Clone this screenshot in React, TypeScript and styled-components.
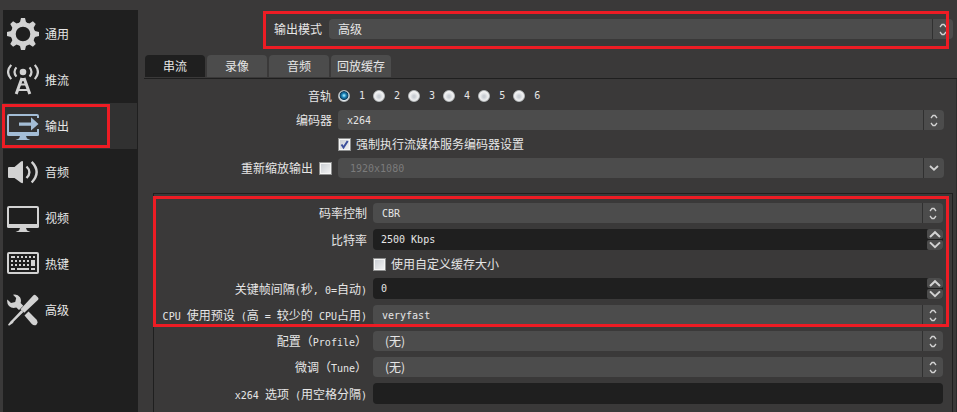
import React from "react";
import styled, { createGlobalStyle, css } from "styled-components";

const cjk = `"Noto Sans CJK SC", "Noto Sans", sans-serif`;
const mono = `"DejaVu Sans Mono", "Noto Sans CJK SC", monospace`;

const GlobalStyle = createGlobalStyle`
  *, *::before, *::after { box-sizing: border-box; }
  body {
    margin: 0;
    background: #3a3939;
    color: #e6e6e6;
    font: 12px/20px ${cjk};
  }
  button, input, select { font: inherit; color: inherit; }
`;

const Page = styled.div`
  display: flex;
  gap: 6px;
  min-height: 100vh;
  padding: 10px 0 0 3px;
`;

const Sidebar = styled.nav`
  flex: none;
  width: 135px;
  padding: 1px 1px 0 0;
  background: #1f1f1f;
`;

const NavItem = styled.button<{ $active?: boolean }>`
  position: relative;
  display: flex;
  align-items: center;
  gap: 6px;
  width: 100%;
  height: 46px;
  padding: 0 4px;
  border: 0;
  text-align: left;
  background: ${(p) => (p.$active ? "#313131" : "transparent")};
`;

const Icon = styled.svg<{ $active?: boolean }>`
  flex: none;
  width: 32px;
  height: 32px;
  color: ${(p) => (p.$active ? "#a3bdd6" : "#d2d2d2")};
`;

const Highlight = styled.span<{ $inset: string; $area?: string }>`
  position: absolute;
  grid-area: ${(p) => p.$area ?? "auto"};
  inset: ${(p) => p.$inset};
  border: 3px solid #ed1c24;
  pointer-events: none;
`;

const Main = styled.main`
  flex: 1;
  min-width: 0;
  display: flex;
  flex-direction: column;
`;

const ModeRow = styled.div`
  position: relative;
  display: grid;
  grid-template-columns: 178px 1fr;
  column-gap: 7px;
  margin: 9px 4px 16px 0;
`;

const Label = styled.label`
  display: flex;
  align-items: center;
  justify-content: flex-end;
  gap: 6px;
  white-space: pre;
`;

const Latin = styled.span`
  font-family: ${mono};
  font-size: 10px;
  line-height: 0;
`;

const SelectWrap = styled.div`
  display: grid;
  grid-template-columns: 1fr 21px;
  height: 20px;
  border-radius: 4px;
  background: #4c4c4c;
`;

const SelectBox = styled.select<{ $latin?: boolean; $indent?: boolean }>`
  grid-area: 1 / 1 / 2 / 3;
  appearance: none;
  min-width: 0;
  padding: 0 21px 0 ${(p) => (p.$indent ? 12 : 9)}px;
  border: 0;
  outline: 0;
  background: transparent;
  opacity: 1;
  ${(p) =>
    p.$latin &&
    css`
      padding-top: 1px;
      font-family: ${mono};
      font-size: 10px;
    `}
  &:disabled { color: #7b7b7b; opacity: 1; }
  option { background: #4c4c4c; }
`;

const SelectArrows = styled.svg`
  grid-area: 1 / 2 / 2 / 3;
  width: 21px;
  height: 20px;
  border-left: 1px solid #303030;
  fill: none;
  stroke: #d2d2d2;
  pointer-events: none;
`;

const Tabs = styled.div`
  display: flex;
  gap: 2px;
  padding: 0 0 1px 1px;
  border-bottom: 1px solid #1f1f1f;
`;

const Tab = styled.button<{ $active?: boolean }>`
  width: 60px;
  height: 22px;
  padding: 0;
  border: 0;
  border-radius: 4px 4px 0 0;
  white-space: nowrap;
  background: ${(p) => (p.$active ? "#1f1f1f" : "#4c4c4c")};
`;

const Pane = styled.section`
  flex: 1;
  display: flex;
  flex-direction: column;
  padding-top: 7px;
  border-right: 1px solid #2b2b2b;
`;

const Form = styled.div`
  display: grid;
  grid-template-columns: 188px 1fr;
  grid-auto-rows: 20px;
  gap: 4px 6px;
  padding-right: 12px;
`;

const Group = styled.div`
  position: relative;
  flex: 1;
  display: grid;
  grid-template-columns: 213px 1fr;
  gap: 6px;
  align-content: start;
  margin: 15px 3px 0 9px;
  padding: 9px 9px 8px 0;
  border: 1px solid #1f1f1f;
  border-bottom: 0;
`;

const Options = styled.div`
  display: flex;
  align-items: center;
  gap: 8px;
`;

const RadioLabel = styled.label`
  display: flex;
  align-items: center;
  gap: 9px;
`;

const Radio = styled.input`
  appearance: none;
  width: 12px;
  height: 12px;
  margin: 0;
  border: 1px solid #b5b9bb;
  border-radius: 50%;
  background: radial-gradient(circle at 50% 55%, #c9ced4 0 15%, #e6e8ea 45%, #fafafa 75%);
  &:checked {
    background: radial-gradient(circle at 50% 45%, #8fdcf5 0 8%, #1c86bd 28%, #10405f 54%, #e8eef2 66%);
  }
`;

const CheckCell = styled.div<{ $compact?: boolean }>`
  grid-column: 2;
  height: ${(p) => (p.$compact ? 16 : 20)}px;
  display: flex;
  align-items: center;
`;

const CheckLabel = styled.label`
  display: flex;
  align-items: center;
  gap: 5px;
  height: 16px;
`;

const CheckFrame = styled.span`
  display: grid;
  width: 13px;
  height: 13px;
  svg {
    grid-area: 1 / 1;
    width: 13px;
    height: 13px;
    fill: none;
    stroke: #3c4f9b;
    stroke-width: 2;
    pointer-events: none;
    visibility: hidden;
  }
  input:checked + svg { visibility: visible; }
`;

const CheckInput = styled.input`
  grid-area: 1 / 1;
  appearance: none;
  width: 13px;
  height: 13px;
  margin: 0;
  border: 1px solid #8e8f8f;
  background: linear-gradient(135deg, #c8ccd2, #f4f4f4);
  box-shadow: inset 0 0 0 1px #f6f6f6;
`;

const TextField = styled.div`
  display: flex;
  min-width: 0;
  height: 21px;
  border-radius: 4px;
  overflow: hidden;
  background: #1f1f1f;
`;

const TextInput = styled.input`
  flex: 1;
  min-width: 0;
  padding: 0 8px;
  border: 0;
  outline: 0;
  background: transparent;
  font-family: ${mono};
  font-size: 10px;
`;

const Stepper = styled.div`
  display: grid;
  grid-template-rows: 10px 10px;
  gap: 1px;
  width: 16px;
`;

const StepButton = styled.button`
  padding: 0;
  border: 0;
  border-radius: 2px;
  background: #4c4c4c;
  svg {
    display: block;
    width: 16px;
    height: 10px;
    fill: none;
    stroke: #d2d2d2;
    stroke-width: 2;
  }
`;

function Screen() {
  return (
    <g fill="currentColor">
      <path d="M8.5 30 12 28.5 13 26H19L20 28.5 23.5 30Z" />
      <path d="M0 22H32V24.5Q32 26 30.5 26H1.5Q0 26 0 24.5Z" />
    </g>
  );
}

const icons: Record<string, React.ReactNode> = {
  general: (
    <g fill="currentColor">
      <circle cx="16" cy="16" r="9.7" fill="none" stroke="currentColor" strokeWidth="4.8" />
      {[0, 45, 90, 135, 180, 225, 270, 315].map((a) => (
        <path key={a} transform={`rotate(${a} 16 16)`} d="M11.3 5.6 13 4 14 0H18L19 4 20.7 5.6Z" />
      ))}
    </g>
  ),
  stream: (
    <g fill="none" stroke="currentColor" strokeWidth="2.2">
      <circle cx="16" cy="8" r="3.3" fill="currentColor" stroke="none" />
      <path d="M9.4 3.4Q5.6 8 9.4 12.6M22.6 3.4Q26.4 8 22.6 12.6" />
      <path d="M4.2 .9Q-2 8 4.2 15.1M27.8 .9Q34 8 27.8 15.1" />
      <path d="M15 14 9.2 30M17 14 22.8 30" strokeWidth="3" />
      <path d="M16 14V17" strokeWidth="4" />
      <path d="M13 20.5H19M11 26H21" strokeWidth="2" />
    </g>
  ),
  output: (
    <>
      <Screen />
      <path d="M31 8V6Q31 5 30 5H2Q1 5 1 6V23M31 19V23" fill="none" stroke="currentColor" strokeWidth="2" />
      <path d="M12 12.4H24V7.3L31.5 14 24 20.6V15.8H12Z" fill="currentColor" />
    </>
  ),
  audio: (
    <g fill="none" stroke="currentColor" strokeWidth="2.4">
      <path d="M2 11H7.5L14 5.5Q16 4.5 16 6V26Q16 28 14 26.8L7.5 22H2Q1 22 1 21V12Q1 11 2 11Z" fill="currentColor" stroke="none" />
      <path d="M19.5 10.5Q25.3 16 19.5 22M24.7 5.8Q34.6 16 24.7 26.5" />
    </g>
  ),
  video: (
    <>
      <Screen />
      <path d="M31 23V6Q31 5 30 5H2Q1 5 1 6V23" fill="none" stroke="currentColor" strokeWidth="2" />
    </>
  ),
  hotkeys: (
    <g fill="currentColor">
      <rect x="1" y="5" width="30" height="20" rx="1" fill="none" stroke="currentColor" strokeWidth="2" />
      <path d="M4 8h4v2h-4zM10 8h2v2h-2zM14 8h2v2h-2zM18 8h2v2h-2zM22 8h2v2h-2zM26 8h2v2h-2z" />
      <path d="M4 12h2v2h-2zM8 12h2v2h-2zM12 12h2v2h-2zM16 12h2v2h-2zM20 12h2v2h-2zM24 12h4v6h-4z" />
      <path d="M4 16h2v2h-2zM8 16h2v2h-2zM12 16h2v2h-2zM16 16h2v2h-2zM20 16h2v2h-2z" />
      <path d="M4 20h4v2h-4zM10 20h12v2h-12zM24 20h4v2h-4z" />
    </g>
  ),
  advanced: (
    <g fill="currentColor">
      <path d="M6 .8Q10.5-.2 13 3.2 14.6 6 13.6 9L16.3 11.8 12 16 9.3 13.5Q5 14.9 2 12 -.4 9.4 .3 5.6L4 9 8.2 8 9.2 4Z" />
      <path d="M17.5 21.5 21.5 17.5 29.2 25.3Q31.6 28.3 29.6 30.4 27.4 32.4 24.8 30Z" />
      <path d="M13.5 15.2 26.2 1.6Q27.5 0 29 1.4L31 3.5Q32.2 5 30.6 6.2L17.3 18.8Z" />
      <path d="M14.4 16 16.4 18 6.8 27.6 6 29 2 31.8 1 30.8 3.8 27 5 26Z" />
    </g>
  ),
};

const navItems = [
  { id: "general", text: "通用" },
  { id: "stream", text: "推流" },
  { id: "output", text: "输出" },
  { id: "audio", text: "音频" },
  { id: "video", text: "视频" },
  { id: "hotkeys", text: "热键" },
  { id: "advanced", text: "高级" },
];

type SelectProps = {
  id: string;
  value: string;
  label?: string;
  latin?: boolean;
  indent?: boolean;
  disabled?: boolean;
  single?: boolean;
};

function Select({ id, value, label, latin, indent, disabled, single }: SelectProps) {
  return (
    <SelectWrap>
      <SelectBox id={id} aria-label={label} $latin={latin} $indent={indent} disabled={disabled}>
        <option>{value}</option>
      </SelectBox>
      <SelectArrows viewBox="0 0 20 20" aria-hidden="true">
        {single ? (
          <path d="M6 8 10 11.7 14 8" strokeWidth="1.8" />
        ) : (
          <path d="M7 8 9 5.5H11L13 8M7 13 9 15.5H11L13 13" strokeWidth="1.3" />
        )}
      </SelectArrows>
    </SelectWrap>
  );
}

function Spin({ id, value }: { id: string; value: string }) {
  return (
    <TextField>
      <TextInput id={id} type="text" defaultValue={value} />
      <Stepper>
        <StepButton aria-label="增加">
          <svg viewBox="0 0 16 10"><path d="M3 8 8 3.2 13 8" /></svg>
        </StepButton>
        <StepButton aria-label="减少">
          <svg viewBox="0 0 16 10"><path d="M3 2.4 8 7.2 13 2.4" /></svg>
        </StepButton>
      </Stepper>
    </TextField>
  );
}

function Check({ id, checked }: { id: string; checked?: boolean }) {
  return (
    <CheckFrame>
      <CheckInput id={id} type="checkbox" defaultChecked={checked} />
      <svg viewBox="0 0 13 13" aria-hidden="true"><path d="M3.5 6.5 5.5 9.5 9.7 3" /></svg>
    </CheckFrame>
  );
}

export default function App() {
  return (
    <>
      <GlobalStyle />
      <Page>
        <Sidebar>
          {navItems.map(({ id, text }) => (
            <NavItem key={id} $active={id === "output"}>
              <Icon viewBox="0 0 32 32" $active={id === "output"} aria-hidden="true">{icons[id]}</Icon>
              {text}
              {id === "output" && <Highlight $inset="1px 27px 1px -1px" />}
            </NavItem>
          ))}
        </Sidebar>
        <Main>
          <ModeRow>
            <Label htmlFor="mode">输出模式</Label>
            <Select id="mode" value="高级" />
            <Highlight $inset="-8px 4px -10px 119px" />
          </ModeRow>
          <Tabs role="tablist">
            <Tab role="tab" aria-selected="true" $active>串流</Tab>
            <Tab role="tab">录像</Tab>
            <Tab role="tab">音频</Tab>
            <Tab role="tab">回放缓存</Tab>
          </Tabs>
          <Pane>
            <Form>
              <Label as="span" id="tracks">音轨</Label>
              <Options role="radiogroup" aria-labelledby="tracks">
                {[1, 2, 3, 4, 5, 6].map((n) => (
                  <RadioLabel key={n}>
                    <Radio type="radio" name="track" defaultChecked={n === 1} />
                    <Latin>{n}</Latin>
                  </RadioLabel>
                ))}
              </Options>
              <Label htmlFor="encoder">编码器</Label>
              <Select id="encoder" value="x264" latin />
              <CheckCell>
                <CheckLabel htmlFor="enforce">
                  <Check id="enforce" checked />
                  强制执行流媒体服务编码器设置
                </CheckLabel>
              </CheckCell>
              <Label htmlFor="rescale">
                重新缩放输出
                <Check id="rescale" />
              </Label>
              <Select id="rescale-size" label="重新缩放输出" value="1920x1080" latin indent disabled single />
            </Form>
            <Group>
              <Label htmlFor="rate">码率控制</Label>
              <Select id="rate" value="CBR" latin />
              <Label htmlFor="bitrate">比特率</Label>
              <Spin id="bitrate" value="2500 Kbps" />
              <CheckCell $compact>
                <CheckLabel htmlFor="buffer">
                  <Check id="buffer" />
                  使用自定义缓存大小
                </CheckLabel>
              </CheckCell>
              <Label htmlFor="keyint">
                <span>关键帧间隔<Latin>(</Latin>秒<Latin>, 0=</Latin>自动<Latin>)</Latin></span>
              </Label>
              <Spin id="keyint" value="0" />
              <Label htmlFor="preset">
                <span><Latin>CPU </Latin>使用预设<Latin> (</Latin>高<Latin> = </Latin>较少的<Latin> CPU</Latin>占用<Latin>)</Latin></span>
              </Label>
              <Select id="preset" value="veryfast" latin />
              <Label htmlFor="profile"><span>配置（<Latin>Profile</Latin>）</span></Label>
              <Select id="profile" value="(无)" indent />
              <Label htmlFor="tune"><span>微调（<Latin>Tune</Latin>）</span></Label>
              <Select id="tune" value="(无)" indent />
              <Label htmlFor="x264opts">
                <span><Latin>x264 </Latin>选项<Latin> (</Latin>用空格分隔<Latin>)</Latin></span>
              </Label>
              <TextField>
                <TextInput id="x264opts" type="text" />
              </TextField>
              <Highlight $area="1 / 1 / 6 / 3" $inset="-7px -6px -2px -1px" />
            </Group>
          </Pane>
        </Main>
      </Page>
    </>
  );
}
